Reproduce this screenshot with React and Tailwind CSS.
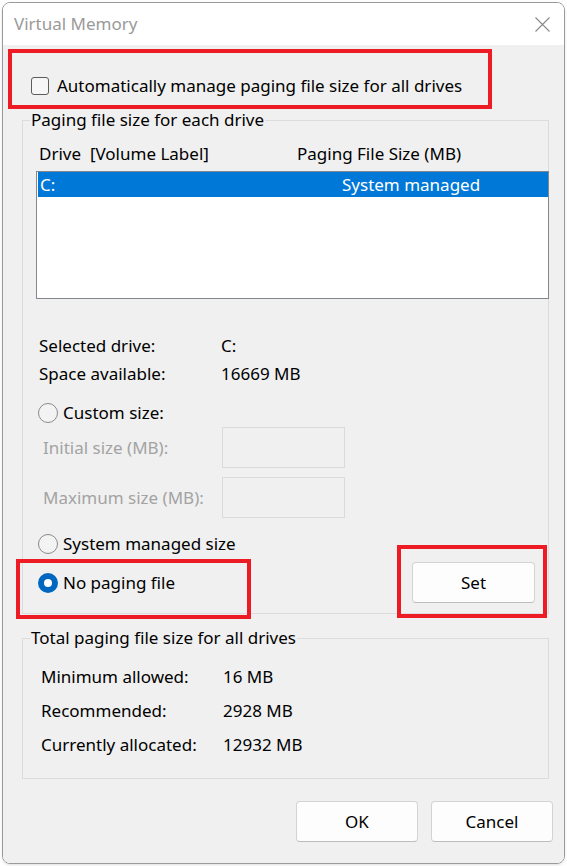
/**
 * Virtual Memory dialog (Windows 11 style)
 */
const RadioDot = ({ checked = false }) => {
  if (checked) {
    return (
      <span className="w-[20px] h-[20px] rounded-full bg-[#0067c0] flex items-center justify-center shrink-0">
        <span className="w-[8px] h-[8px] rounded-full bg-white" />
      </span>
    );
  }
  return <span className="w-[20px] h-[20px] rounded-full border border-[#8a8a8a] bg-[#f3f3f3] shrink-0" />;
};

const WinButton = ({ children, className = '' }) => (
  <button
    className={`h-[41px] bg-[#fdfdfd] border border-[#d3d3d3] border-b-[#bdbdbd] rounded-[4px] text-black flex items-center justify-center ${className}`}
  >
    {children}
  </button>
);

const InfoRow = ({ label, value, height = 'h-[28px]', indent = 'ml-[9px]' }) => (
  <div className={`flex items-center ${height} ${indent}`}>
    <span className="w-[182px]">{label}</span>
    <span>{value}</span>
  </div>
);

const App = () => {
  return (
    <div className="w-[567px] h-[866px] bg-white font-['Noto_Sans',sans-serif] text-[17px] text-black overflow-hidden">
      <div className="ml-[2px] mt-[2px] w-[563px] h-[862px] border border-[#9a9a9a] rounded-[8px] overflow-hidden flex flex-col shadow-sm">
        {/* title bar */}
        <div className="h-[42px] bg-white flex items-center justify-between pl-[11px] pr-[14px] shrink-0">
          <span className="text-[#9a9a9a]">Virtual Memory</span>
          <svg width="15" height="15" viewBox="0 0 15 15">
            <path d="M0.5 0.5 L14.5 14.5 M14.5 0.5 L0.5 14.5" stroke="#8c8c8c" strokeWidth="1.2" fill="none" />
          </svg>
        </div>

        {/* body */}
        <div className="relative flex-1 bg-[#f0f0f0]">
          <div className="mt-[29px] ml-[28px] h-[24px] flex items-center gap-[8px]">
            <span className="w-[18px] h-[18px] rounded-[3px] border border-[#5c5c5c] bg-[#f6f6f6]" />
            <span>Automatically manage paging file size for all drives</span>
          </div>

          {/* paging file size per drive */}
          <fieldset className="mt-[10px] ml-[19px] w-[527px] min-w-0 border border-[#dcdcdc] px-[7px] pb-[10px]">
            <legend className="px-[1px] leading-[24px]">Paging file size for each drive</legend>

            <div className="mt-[10px] ml-[9px] h-[24px] flex items-center">
              <span className="w-[258px]">Drive&nbsp;&nbsp;[Volume Label]</span>
              <span>Paging File Size (MB)</span>
            </div>

            <div className="mt-[5px] ml-[6px] w-[513px] h-[128px] border border-[#828790] bg-white pl-[1px]">
              <div className="h-[25px] bg-[#0078d7] text-white flex items-center pl-[2px]">
                <span className="w-[302px]">C:</span>
                <span>System managed</span>
              </div>
            </div>

            <div className="mt-[33px]">
              <InfoRow label="Selected drive:" value="C:" />
              <InfoRow label="Space available:" value="16669 MB" />
            </div>

            <div className="mt-[11px] ml-[8px] h-[28px] flex items-center gap-[5px]">
              <RadioDot />
              <span>Custom size:</span>
            </div>

            <div className="ml-[13px] h-[41px] flex items-center">
              <span className="w-[179px] text-[#a3a3a3]">Initial size (MB):</span>
              <div className="w-[123px] h-[41px] border border-[#dadada] bg-[#f0f0f0]" />
            </div>
            <div className="mt-[9px] ml-[13px] h-[41px] flex items-center">
              <span className="w-[179px] text-[#a3a3a3]">Maximum size (MB):</span>
              <div className="w-[123px] h-[41px] border border-[#dadada] bg-[#f0f0f0]" />
            </div>

            <div className="mt-[12px] ml-[8px] h-[28px] flex items-center gap-[5px]">
              <RadioDot />
              <span>System managed size</span>
            </div>

            <div className="mt-[4px] h-[41px] flex items-center justify-between pr-[6px]">
              <div className="ml-[8px] flex items-center gap-[5px]">
                <RadioDot checked />
                <span>No paging file</span>
              </div>
              <WinButton className="w-[123px]">Set</WinButton>
            </div>
          </fieldset>

          {/* totals */}
          <fieldset className="mt-[12px] ml-[19px] w-[527px] min-w-0 border border-[#dcdcdc] px-[7px] pb-[16px]">
            <legend className="px-[1px] leading-[24px]">Total paging file size for all drives</legend>
            <div className="mt-[10px]">
              <InfoRow label="Minimum allowed:" value="16 MB" height="h-[34px]" indent="ml-[11px]" />
              <InfoRow label="Recommended:" value="2928 MB" height="h-[34px]" indent="ml-[11px]" />
              <InfoRow label="Currently allocated:" value="12932 MB" height="h-[34px]" indent="ml-[11px]" />
            </div>
          </fieldset>

          <div className="mt-[22px] pr-[11px] flex justify-end gap-[13px]">
            <WinButton className="w-[122px]">OK</WinButton>
            <WinButton className="w-[122px]">Cancel</WinButton>
          </div>

          {/* red highlight annotations */}
          <div className="absolute left-[5px] top-[4px] w-[484px] h-[60px] border-4 border-[#ed1c24]" />
          <div className="absolute left-[13px] top-[514px] w-[235px] h-[60px] border-4 border-[#ed1c24]" />
          <div className="absolute left-[394px] top-[500px] w-[150px] h-[73px] border-4 border-[#ed1c24]" />
        </div>
      </div>
    </div>
  );
};

export default App;
